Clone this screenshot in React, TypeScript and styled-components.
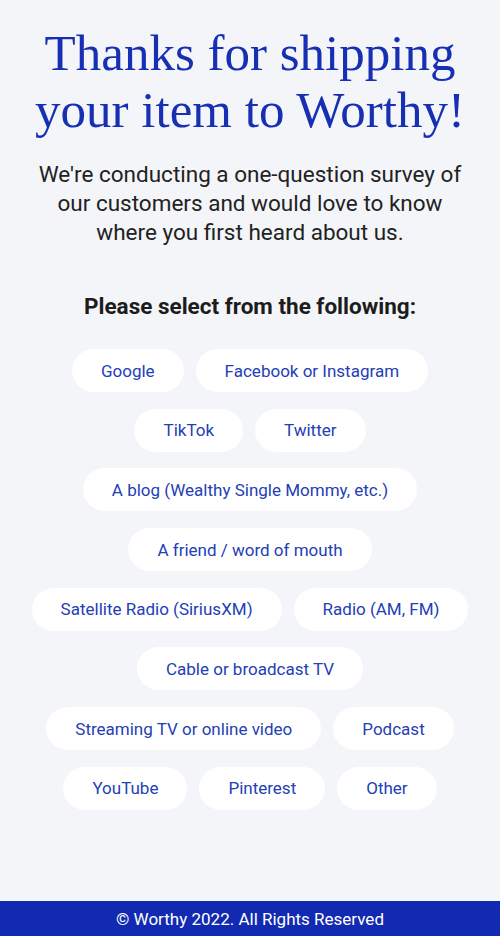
import React from "react";
import styled, { createGlobalStyle } from "styled-components";

const GlobalStyle = createGlobalStyle`
  html, body {
    margin: 0;
    padding: 0;
    background: #f3f5f9;
  }
  * { box-sizing: border-box; }
`;

const Page = styled.div`
  min-height: 100vh;
  display: flex;
  flex-direction: column;
  background: #f3f5f9;
  font-family: Roboto, "Liberation Sans", sans-serif;
`;

const Main = styled.main`
  flex: 1;
  display: flex;
  flex-direction: column;
  align-items: center;
  padding: 25px 16px 0;
`;

const Title = styled.h1`
  margin: 0;
  font-family: "Liberation Serif", "DejaVu Serif", serif;
  font-weight: 400;
  font-size: 51px;
  line-height: 57px;
  color: #1730b3;
  text-align: center;
`;

const Intro = styled.p`
  margin: 21px 0 0;
  font-size: 22.5px;
  line-height: 29px;
  color: #222222;
  text-align: center;
  max-width: 440px;
`;

const Prompt = styled.h2`
  margin: 45px 0 0;
  font-size: 22.5px;
  line-height: 28px;
  font-weight: 700;
  color: #1c1c1c;
  text-align: center;
`;

const Options = styled.div`
  margin-top: 29px;
  display: flex;
  flex-direction: column;
  align-items: center;
  gap: 16.7px;
`;

const OptionRow = styled.div`
  display: flex;
  justify-content: center;
  gap: 12px;
`;

const Option = styled.button`
  height: 43px;
  padding: 0 29px;
  border: none;
  border-radius: 22px;
  background: #ffffff;
  color: #2340b5;
  font-family: Roboto, "Liberation Sans", sans-serif;
  font-size: 17px;
  white-space: nowrap;
  cursor: pointer;
`;

const Footer = styled.footer`
  height: 35px;
  background: #1229b1;
  color: #ffffff;
  display: flex;
  align-items: center;
  justify-content: center;
  font-size: 17px;
`;

const rows: string[][] = [
  ["Google", "Facebook or Instagram"],
  ["TikTok", "Twitter"],
  ["A blog (Wealthy Single Mommy, etc.)"],
  ["A friend / word of mouth"],
  ["Satellite Radio (SiriusXM)", "Radio (AM, FM)"],
  ["Cable or broadcast TV"],
  ["Streaming TV or online video", "Podcast"],
  ["YouTube", "Pinterest", "Other"],
];

export default function App() {
  return (
    <>
      <GlobalStyle />
      <Page>
        <Main>
          <Title>
            Thanks for shipping
            <br />
            your item to Worthy!
          </Title>
          <Intro>
            We're conducting a one-question survey of our customers and would
            love to know where you first heard about us.
          </Intro>
          <Prompt>Please select from the following:</Prompt>
          <Options>
            {rows.map((row, i) => (
              <OptionRow key={i}>
                {row.map((label) => (
                  <Option key={label} type="button">
                    {label}
                  </Option>
                ))}
              </OptionRow>
            ))}
          </Options>
        </Main>
        <Footer>© Worthy 2022. All Rights Reserved</Footer>
      </Page>
    </>
  );
}
